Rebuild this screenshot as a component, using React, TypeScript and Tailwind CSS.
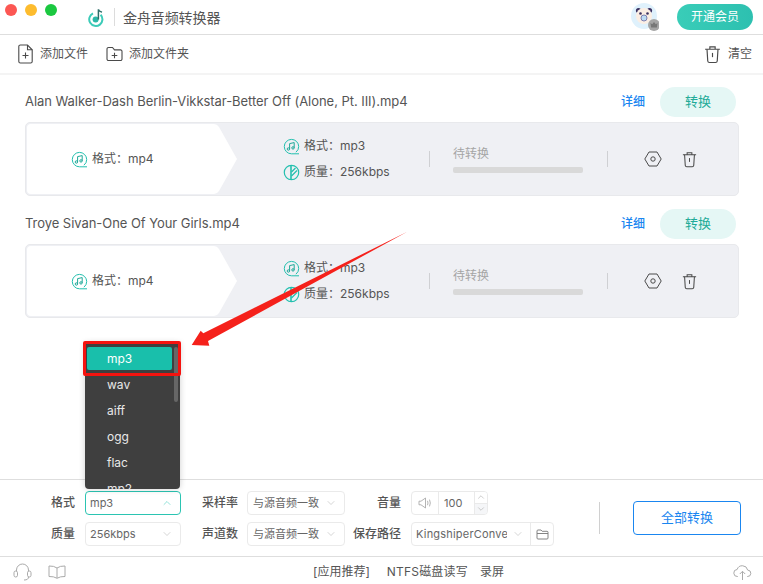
import { ChevronDown, ChevronUp } from "lucide-react";

const FONT = "font-['Inter','Noto_Sans_CJK_SC',sans-serif]";

function NoteIcon() {
  return (
    <svg width="17" height="17" viewBox="0 0 17 17" fill="none" stroke="#22bfae" strokeWidth="1" className="shrink-0">
      <path d="M16 15.8H8.500a7.200 7.200 0 1 1 7.200-7.300 7.200 7.200 0 0 1-2.800 5.700" />
      <path d="M6.600 11V5.600l4.600-1v5.200" stroke="#1fa898" />
      <circle cx="5.400" cy="11" r="1.200" stroke="#1fa898" />
      <circle cx="10" cy="9.900" r="1.200" stroke="#1fa898" />
    </svg>
  );
}

function QualityIcon() {
  return (
    <svg width="17" height="17" viewBox="0 0 17 17" fill="none" stroke="#22bfae" strokeWidth="1.200" className="shrink-0">
      <circle cx="8.500" cy="8.500" r="7.200" />
      <path d="M8 1.300v14.400" strokeWidth="1.600" />
      <path d="M8.500 8l4-4M8.500 12l5.500-5.500" />
    </svg>
  );
}

function TrashIcon({ size = 16 }: { size?: number }) {
  return (
    <svg width={size} height={size} viewBox="0 0 16 18" fill="none" stroke="#4a4a4a" strokeWidth="1.100" className="shrink-0">
      <path d="M1 4h14M5.500 4V1.800h5V4" />
      <path d="M2.800 4l.7 11.200a1.600 1.600 0 0 0 1.600 1.400h5.800a1.600 1.600 0 0 0 1.600-1.400L13.200 4" />
      <path d="M8 7.500v4" />
    </svg>
  );
}

function FormatLine() {
  return (
    <div className="flex items-center gap-1 text-[12px] text-[#555]">
      <NoteIcon />
      <span>格式：mp4</span>
    </div>
  );
}

function FileRow({ title }: { title: string }) {
  return (
    <div className="flex flex-col gap-[5px]">
      <div className="h-[30px] flex items-center pr-[3px]">
        <span className="flex-1 text-[13px] tracking-[-0.05px] text-[#555]">{title}</span>
        <span className="text-[12px] font-medium text-[#1a86f0] mr-[15px]">详细</span>
        <button className="w-[76px] h-[30px] rounded-full bg-[#e5f7f5] text-[13px] text-[#22ab98]">转换</button>
      </div>
      <div className="h-[74px] rounded-[5px] bg-[#eff0f4] border border-[#e8e9ec] flex items-center">
        <div className="relative w-[212px] h-full shrink-0 flex items-center pl-[45px]">
          <svg className="absolute inset-0" width="212" height="72" viewBox="0 0 212 72">
            <path d="M5 1H188q3 0 5 3L211 36 193 68q-2 3-5 3H5q-4 0-4-4V5q0-4 4-4z" fill="#fff" />
          </svg>
          <div className="relative">
            <FormatLine />
          </div>
        </div>
        <div className="w-[146px] ml-[45px] flex flex-col gap-2 text-[12px] text-[#555]">
          <div className="flex items-center gap-1">
            <NoteIcon />
            <span>格式：mp3</span>
          </div>
          <div className="flex items-center gap-1">
            <QualityIcon />
            <span>质量：256kbps</span>
          </div>
        </div>
        <div className="w-px h-4 bg-[#cfd0d3]" />
        <div className="ml-[23px] w-[130px] flex flex-col gap-[5px]">
          <span className="text-[12px] leading-[16px] text-[#a5a5a5]">待转换</span>
          <div className="h-[6px] rounded-[2px] bg-[#d9d9d9]" />
        </div>
        <div className="ml-[24px] w-px h-4 bg-[#cfd0d3]" />
        <div className="ml-[36px] flex items-center gap-[19px]">
          <svg width="18" height="16" viewBox="0 0 18 16" fill="none" stroke="#4a4a4a" strokeWidth="1">
            <path d="M5 1h8l4.200 7-4.200 7H5L.8 8z" />
            <circle cx="9" cy="8" r="2.200" />
          </svg>
          <TrashIcon size={17} />
        </div>
      </div>
    </div>
  );
}

function Field({ label, className, children }: { label: string; className?: string; children: React.ReactNode }) {
  return (
    <div className="flex items-center">
      <span className={`text-[12px] font-medium text-[#555] text-right ${className}`}>{label}</span>
      {children}
    </div>
  );
}

function Select({ text, width, small }: { text: string; width: string; small?: boolean }) {
  return (
    <div className={`h-6 rounded-[4px] border border-[#eaeaea] flex items-center pr-[7px] ${small ? "pl-[5px]" : "pl-1"} ${width}`}>
      <span className="flex-1 text-[11px] text-[#666]">{text}</span>
      <ChevronDown size={12} strokeWidth={1} className="text-[#aaa]" />
    </div>
  );
}

export default function App() {
  return (
    <div className={`relative w-[763px] h-[584px] overflow-hidden bg-white flex flex-col ${FONT}`}>
      {/* title bar */}
      <div className="h-[35px] shrink-0 border-b border-[#dedede] flex items-center pl-[5px] pr-[10px]">
        <div className="flex gap-[8px] self-start mt-[4px]">
          <div className="w-3 h-3 rounded-full bg-[#fc5753]" />
          <div className="w-3 h-3 rounded-full bg-[#fdbc2e]" />
          <div className="w-3 h-3 rounded-full bg-[#1bc840]" />
        </div>
        <svg className="ml-[31px]" width="16" height="20" viewBox="0 0 16 20" fill="none">
          <path d="M5 6.400a6.600 6.600 0 1 0 7.600 1.400" stroke="#3ccbb8" strokeWidth="2" />
          <circle cx="7.600" cy="12.600" r="3" fill="#2cb8a8" />
          <path d="M10.400 12.500V2.200c0 1.700 2 2.400 3.600 3" stroke="#2f6f6a" strokeWidth="1.500" />
        </svg>
        <div className="ml-[10px] w-px h-[18px] bg-[#dcdcdc]" />
        <span className="ml-[8px] text-[14px] tracking-[-0.1px] text-[#555]">金舟音频转换器</span>
        <div className="flex-1" />
        <svg width="28" height="28" viewBox="0 0 28 28">
          <circle cx="13" cy="13" r="13" fill="#dff1fc" />
          <circle cx="7.500" cy="7.500" r="2.600" fill="#3a3060" />
          <circle cx="18.500" cy="7.500" r="2.600" fill="#3a3060" />
          <circle cx="13" cy="13" r="8" fill="#fbeee4" />
          <circle cx="9.500" cy="10.500" r="1.300" fill="#3a3060" />
          <circle cx="16.500" cy="10.500" r="1.300" fill="#3a3060" />
          <circle cx="13" cy="15" r="3" fill="#bcdcf4" stroke="#7d7fb0" strokeWidth="1" />
          <circle cx="23" cy="22" r="6" fill="#a5a5a5" />
          <path d="M19.500 20l1.700 1.300L23 19l1.800 2.300 1.700-1.300-.6 4.600h-5.800z" fill="#777" />
        </svg>
        <button className="ml-[18px] w-[76px] h-[26px] rounded-full bg-gradient-to-r from-[#39cdb8] to-[#2dc0b0] text-[12px] text-white">开通会员</button>
      </div>

      {/* toolbar */}
      <div className="h-10 shrink-0 border-b-2 border-[#f4f4f4] flex items-center pl-[18px] pr-[11px] text-[12px] text-[#555]">
        <svg width="15" height="20" viewBox="0 0 15 20" fill="none" stroke="#4a4a4a" strokeWidth="1.100">
          <path d="M9.500 1H2.400A1.600 1.600 0 0 0 .8 2.600v14.800A1.600 1.600 0 0 0 2.400 19h10.200a1.600 1.600 0 0 0 1.600-1.600V5.800z" />
          <path d="M9.500 1v4.800h4.700M7.500 8.500v6M4.500 11.500h6" />
        </svg>
        <span className="ml-[7px]">添加文件</span>
        <svg className="ml-[18px]" width="17" height="16" viewBox="0 0 17 15" fill="none" stroke="#4a4a4a" strokeWidth="1.100">
          <path d="M1 2.500A1.500 1.500 0 0 1 2.500 1h4l2 2.400h6A1.500 1.500 0 0 1 16 5v7.500a1.500 1.500 0 0 1-1.500 1.500h-12A1.500 1.500 0 0 1 1 12.500z" />
          <path d="M8.500 6.200v5.600M5.700 9h5.600" />
        </svg>
        <span className="ml-[6px]">添加文件夹</span>
        <div className="flex-1" />
        <TrashIcon size={19} />
        <span className="ml-[6px]">清空</span>
      </div>

      {/* file list */}
      <div className="flex-1 pt-[12px] pl-[25px] pr-[24px] flex flex-col gap-[13px]">
        <FileRow title="Alan Walker-Dash Berlin-Vikkstar-Better Off (Alone, Pt. III).mp4" />
        <FileRow title="Troye Sivan-One Of Your Girls.mp4" />
      </div>

      {/* output settings */}
      <div className="h-[77px] shrink-0 border-t border-[#dedede] flex items-center">
        <div className="grid grid-cols-[181px_164px_auto] grid-rows-[24px_24px] gap-y-[7px] mt-[1px]">
          <Field label="格式" className="w-[75px] mr-[10px]">
            <div className="w-24 h-6 rounded-[4px] border border-[#2bc4b2] flex items-center pl-1 pr-[7px]">
              <span className="flex-1 text-[11px] text-[#666]">mp3</span>
              <ChevronUp size={12} strokeWidth={1} className="text-[#2bc4b2]" />
            </div>
          </Field>
          <Field label="采样率" className="w-[57px] mr-[9px]">
            <Select text="与源音频一致" width="w-[98px]" small />
          </Field>
          <Field label="音量" className="w-[56px] mr-[10px]">
            <div className="w-[77px] h-6 rounded-[4px] border border-[#eaeaea] flex items-center overflow-hidden">
              <div className="w-[26px] h-full flex items-center justify-center">
                <svg width="14" height="12" viewBox="0 0 14 12" fill="none" stroke="#aaa" strokeWidth="0.9">
                  <path d="M1 4.200h2L7.500 1v10L3 7.800H1zM9.500 3.800q1 2.200 0 4.400M11.500 2.600q1.600 3.400 0 6.800" />
                </svg>
              </div>
              <div className="w-px h-full bg-[#eaeaea]" />
              <span className="flex-1 pl-[5px] text-[11px] text-[#666]">100</span>
              <div className="w-[13px] h-full border-l border-[#eaeaea] flex flex-col bg-[#f5f6f8]">
                <div className="flex-1 flex items-center justify-center bg-white border-b border-[#eaeaea]">
                  <ChevronUp size={10} strokeWidth={1} className="text-[#888]" />
                </div>
                <div className="flex-1 flex items-center justify-center">
                  <ChevronDown size={10} strokeWidth={1} className="text-[#888]" />
                </div>
              </div>
            </div>
          </Field>
          <Field label="质量" className="w-[75px] mr-[10px]">
            <Select text="256kbps" width="w-24" />
          </Field>
          <Field label="声道数" className="w-[57px] mr-[9px]">
            <Select text="与源音频一致" width="w-[98px]" small />
          </Field>
          <Field label="保存路径" className="w-[56px] mr-[10px]">
            <div className="w-[143px] h-6 rounded-[4px] border border-[#eaeaea] flex items-center">
              <span className="w-[91px] ml-1 overflow-hidden whitespace-nowrap text-[11px] tracking-[0.2px] text-[#666]">KingshiperConverter</span>
              <ChevronDown size={12} strokeWidth={1} className="ml-[5px] text-[#aaa]" />
              <div className="ml-[6px] w-px h-full bg-[#eaeaea]" />
              <svg className="ml-[5px]" width="13" height="11" viewBox="0 0 13 11" fill="none" stroke="#777" strokeWidth="0.9">
                <path d="M1 2a1 1 0 0 1 1-1h3l1.200 1.300H11a1 1 0 0 1 1 1V9a1 1 0 0 1-1 1H2a1 1 0 0 1-1-1zM1 4.500h11" />
              </svg>
            </div>
          </Field>
        </div>
        <div className="ml-[45px] w-px h-8 bg-[#d0d0d0]" />
        <button className="ml-[33px] w-[108px] h-[34px] rounded-[4px] border border-[#1a86f0] text-[13px] text-[#1a86f0]">全部转换</button>
      </div>

      {/* footer */}
      <div className="h-7 shrink-0 border-t border-[#dedede] flex items-center pt-[3px] pl-[13px] pr-[11px] text-[12px] text-[#555]">
        <svg width="19" height="18" viewBox="0 0 19 18" fill="none" stroke="#aaa" strokeWidth="1">
          <path d="M3.500 8V7a6 6 0 0 1 12 0v1" />
          <rect x="1" y="8" width="3.500" height="6" rx="1.700" />
          <rect x="14.500" y="8" width="3.500" height="6" rx="1.700" />
          <path d="M15.500 14q0 3-4.500 3" />
        </svg>
        <svg className="ml-[16px]" width="18" height="14" viewBox="0 0 18 14" fill="none" stroke="#aaa" strokeWidth="1">
          <path d="M9 3Q6 .8 1 1v10.500q5-.2 8 1.800 3-2 8-1.800V1q-5-.2-8 2zM9 3v10" />
        </svg>
        <span className="ml-[247px]">[应用推荐]</span>
        <span className="ml-[17px] tracking-[0.2px]">NTFS磁盘读写</span>
        <span className="ml-3">录屏</span>
        <div className="flex-1" />
        <svg width="19" height="17" viewBox="0 0 19 17" fill="none" stroke="#aaa" strokeWidth="1">
          <path d="M5 12.500H4.500a3.500 3.500 0 0 1-.4-7 5.500 5.500 0 0 1 10.600.6 3.200 3.200 0 0 1-.2 6.400H14" />
          <path d="M9.500 16V7.500M6.800 10l2.700-2.700 2.700 2.700" />
        </svg>
      </div>

      {/* open format dropdown */}
      <div className="absolute left-[85px] top-[343px] w-[95px] h-[146px] rounded-b-[4px] bg-[#3f3f3f] overflow-hidden shadow-[0_0_6px_rgba(0,0,0,0.2)]">
        <div className="absolute left-[89px] top-[4px] w-1 h-[55px] rounded-full bg-[#666]" />
        <div className="flex flex-col pt-[2px] text-[12px] text-[#e8e8e8]">
          <div className="ml-[2px] mt-[2px] mb-[2px] w-[85px] h-[23px] rounded-[2px] bg-[#19bfab] flex items-center pl-[20px] text-white">mp3</div>
          {["wav", "aiff", "ogg", "flac", "mp2"].map((f) => (
            <div key={f} className="h-[26px] shrink-0 flex items-center pl-[22px]">{f}</div>
          ))}
        </div>
      </div>
      <div className="absolute left-[83px] top-[341px] w-[98px] h-[35px] border-[3px] border-[#f5130f] rounded-[2px]" />

      {/* annotation arrow */}
      <svg className="absolute left-[185px] top-[228px]" width="228" height="124" viewBox="0 0 228 124">
        <path d="M222.300 3.700L18.300 105.300l-2.600-2.600L6.700 117l17.600.7-1.300-4.700z" fill="#f5211b" />
      </svg>
    </div>
  );
}
